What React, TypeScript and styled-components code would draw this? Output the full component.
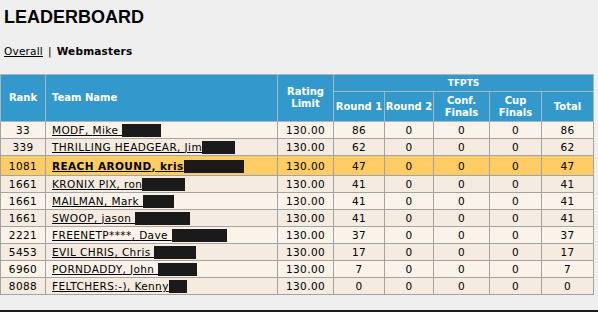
import React from "react";
import styled, { createGlobalStyle } from "styled-components";

const GlobalStyle = createGlobalStyle`
  html, body {
    margin: 0;
    padding: 0;
    background: #efefef;
  }
  body {
    font-family: "DejaVu Sans", Verdana, sans-serif;
    font-size: 10.5px;
    color: #000;
  }
`;

interface Entry {
  rank: number;
  team: string;
  owner: string;
  hidden: number;
  r1: number;
  mine?: boolean;
}

const entries: Entry[] = [
  { rank: 33, team: "MODF", owner: "Mike ", hidden: 39, r1: 86 },
  { rank: 339, team: "THRILLING HEADGEAR", owner: "Jim", hidden: 33, r1: 62 },
  { rank: 1081, team: "REACH AROUND", owner: "kris", hidden: 60, r1: 47, mine: true },
  { rank: 1661, team: "KRONIX PIX", owner: "ron", hidden: 43, r1: 41 },
  { rank: 1661, team: "MAILMAN", owner: "Mark ", hidden: 31, r1: 41 },
  { rank: 1661, team: "SWOOP", owner: "jason ", hidden: 55, r1: 41 },
  { rank: 2221, team: "FREENETP****", owner: "Dave ", hidden: 55, r1: 37 },
  { rank: 5453, team: "EVIL CHRIS", owner: "Chris ", hidden: 42, r1: 17 },
  { rank: 6960, team: "PORNDADDY", owner: "John ", hidden: 39, r1: 7 },
  { rank: 8088, team: "FELTCHERS:-)", owner: "Kenny", hidden: 18, r1: 0 },
];

const colWidths = [45, 232, 56, 51, 49, 56, 52, 52];

const App: React.FC = () => {
  return (
    <>
      <GlobalStyle />
      <Page>
        <Title>LEADERBOARD</Title>
        <Tabs>
          <TabLink href="#">Overall</TabLink>
          <Sep>|</Sep>
          <TabCurrent>Webmasters</TabCurrent>
        </Tabs>
        <Board>
          <colgroup>
            {colWidths.map((w, idx) => (
              <col key={idx} style={{ width: w }} />
            ))}
          </colgroup>
          <thead>
            <tr>
              <Th rowSpan={2}>Rank</Th>
              <Th rowSpan={2} $left>
                Team Name
              </Th>
              <Th rowSpan={2}>
                Rating
                <br />
                Limit
              </Th>
              <Th colSpan={5} $small>
                TFPTS
              </Th>
            </tr>
            <tr>
              <Th>Round 1</Th>
              <Th>Round 2</Th>
              <Th>
                Conf.
                <br />
                Finals
              </Th>
              <Th>
                Cup
                <br />
                Finals
              </Th>
              <Th>Total</Th>
            </tr>
          </thead>
          <tbody>
            {entries.map((e, idx) => (
              <Row key={idx} $odd={idx % 2 === 0} $mine={!!e.mine}>
                <Td>{e.rank}</Td>
                <TeamCell>
                  <TeamLink href="#" $mine={!!e.mine}>
                    {e.team}, {e.owner}
                    <Redact $w={e.hidden} />
                  </TeamLink>
                </TeamCell>
                <Td>130.00</Td>
                <Td>{e.r1}</Td>
                <Td>0</Td>
                <Td>0</Td>
                <Td>0</Td>
                <Td>{e.r1}</Td>
              </Row>
            ))}
          </tbody>
        </Board>
        <Bottom />
      </Page>
    </>
  );
};

export default App;

const Page = styled.div`
  width: 598px;
  height: 312px;
  display: flex;
  flex-direction: column;
  overflow: hidden;
`;

const Title = styled.h1`
  margin: 7px 0 0 4px;
  font-family: "Liberation Sans", Arial, sans-serif;
  font-size: 18px;
  line-height: 21px;
  font-weight: bold;
`;

const Tabs = styled.div`
  display: flex;
  align-items: center;
  gap: 5px;
  margin: 17px 0 16px 4px;
  line-height: 13px;
  font-size: 10.5px;
  letter-spacing: 0.2px;
`;

const TabLink = styled.a`
  color: #000;
  text-decoration: underline;
`;

const Sep = styled.span``;

const TabCurrent = styled.span`
  font-weight: bold;
`;

const Board = styled.table`
  width: 593px;
  table-layout: fixed;
  border-collapse: collapse;
  border: 1px solid #a3a3a3;
`;

const Th = styled.th<{ $left?: boolean; $small?: boolean }>`
  background: #3399cc;
  color: #fff;
  font-weight: bold;
  font-size: ${(p) => (p.$small ? "9px" : "10px")};
  text-align: ${(p) => (p.$left ? "left" : "center")};
  padding: ${(p) => (p.$left ? "0 0 0 6px" : "0")};
  border: 1px solid #a9b4bb;
  line-height: 12px;
  height: ${(p) => (p.$small ? "16px" : "29px")};
  white-space: nowrap;
`;

const Row = styled.tr<{ $odd: boolean; $mine: boolean }>`
  background: ${(p) => (p.$mine ? "#ffcc66" : p.$odd ? "#fbf3ea" : "#f5ebe0")};
  height: ${(p) => (p.$mine ? "20px" : "17px")};
`;

const Td = styled.td`
  border: 1px solid #a3a3a3;
  text-align: center;
  padding: 0;
  line-height: 14px;
  font-size: 10.5px;
  letter-spacing: 0.4px;
  white-space: nowrap;
`;

const TeamCell = styled(Td)`
  text-align: left;
  padding-left: 6px;
`;

const TeamLink = styled.a<{ $mine: boolean }>`
  color: #000;
  text-decoration: underline;
  font-weight: ${(p) => (p.$mine ? "bold" : "normal")};
  white-space: nowrap;
`;

const Redact = styled.span<{ $w: number }>`
  display: inline-block;
  width: ${(p) => p.$w}px;
  height: 13px;
  background: #1a1a1a;
  vertical-align: -3px;
`;

const Bottom = styled.div`
  margin-top: auto;
  height: 2px;
  background: #1c1c1c;
`;
